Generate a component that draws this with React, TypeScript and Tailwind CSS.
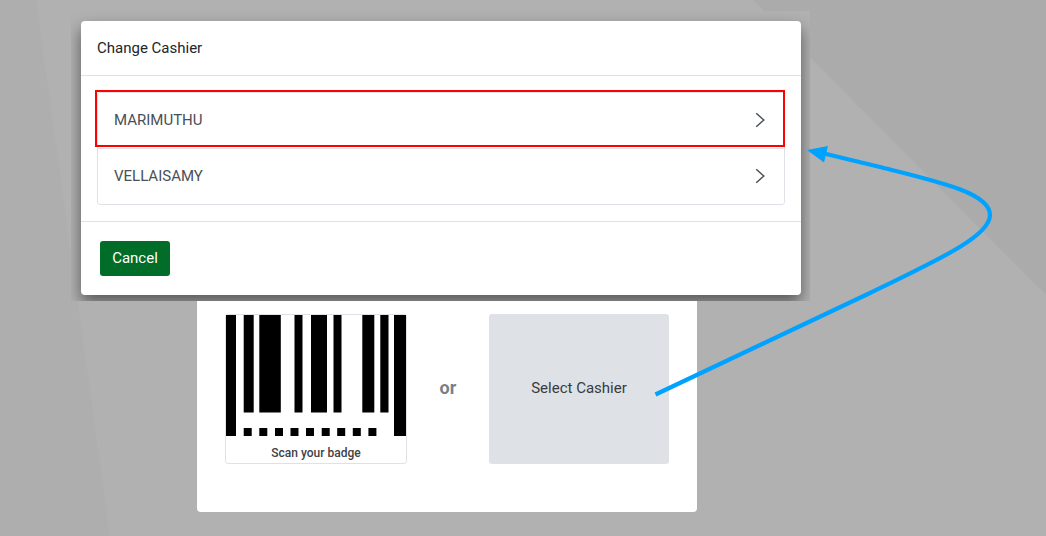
const cashiers = [
  { name: 'MARIMUTHU', highlighted: true },
  { name: 'VELLAISAMY', highlighted: false },
];

const bars = [
  [0, 10, 121],
  [17.7, 10, 97.5],
  [33.3, 21.5, 97.5],
  [68.5, 8, 97.5],
  [85, 16, 97.5],
  [107.5, 8, 97.5],
  [136.3, 12, 97.5],
  [154.3, 8.2, 97.5],
  [168, 12, 121],
];

const dots = [17.7, 33.3, 49, 64.5, 80, 95.7, 111.2, 126.8, 142.4];

function Backdrop() {
  return (
    <svg
      className="absolute inset-0 h-full w-full"
      viewBox="0 0 1046 536"
      preserveAspectRatio="none"
      aria-hidden="true"
    >
      <polygon points="0,0 36,0 110,536 0,536" fill="#aeaeae" />
      <polygon points="753,0 1046,0 1046,295" fill="#ababab" />
    </svg>
  );
}

function Arrow() {
  return (
    <svg
      className="pointer-events-none absolute left-0 top-0 h-[536px] w-[1046px]"
      viewBox="0 0 1046 536"
      aria-hidden="true"
    >
      <path
        d="M655.5 394.5 L870 293 C940 259 990 236 990 215 C990 193 940 182 880 167 L822 153"
        fill="none"
        stroke="#00a2ff"
        strokeWidth="4.2"
      />
      <polygon points="807,150 828,146 824,162.5" fill="#00a2ff" />
    </svg>
  );
}

function Barcode() {
  return (
    <svg className="block h-[121px] w-full" viewBox="0 0 180 121" preserveAspectRatio="none" aria-hidden="true">
      {bars.map(([x, w, h]) => (
        <rect key={x} x={x} y="0" width={w} height={h} />
      ))}
      {dots.map((x) => (
        <rect key={x} x={x} y="113" width="8" height="8" />
      ))}
    </svg>
  );
}

function Chevron() {
  return (
    <svg className="h-4 w-4" viewBox="0 0 16 16" fill="none" stroke="#495057" strokeWidth="1.5" aria-hidden="true">
      <path d="M4.2 0.3 L11.8 7 L4.2 13.7" />
    </svg>
  );
}

function CashierDialog() {
  return (
    <div className="overflow-hidden bg-[#b1b1b1] pb-[6px] pl-[10px] pr-[9px] pt-[10px]">
      <section
        role="dialog"
        aria-labelledby="dialog-title"
        className="rounded bg-white shadow-[0_8px_16px_rgba(0,0,0,0.5)]"
      >
        <header className="border-b border-[#dee2e6] px-4 py-4">
          <h1 id="dialog-title" className="text-[15px] leading-[22px] text-[#212529]">
            Change Cashier
          </h1>
        </header>
        <ul className="m-4 divide-y divide-[#dee2e6] rounded-[3px] border border-[#dee2e6]">
          {cashiers.map(({ name, highlighted }) => (
            <li key={name} className="relative">
              <button
                type="button"
                className="flex h-[55px] w-full items-center justify-between px-4 text-[15px] text-[#495057]"
              >
                {name}
                <Chevron />
              </button>
              {highlighted && (
                <span className="pointer-events-none absolute -left-[3px] -right-px -top-[3px] bottom-px border-2 border-[#ff0000]" />
              )}
            </li>
          ))}
        </ul>
        <footer className="border-t border-[#dee2e6] px-[19px] py-[19px]">
          <button
            type="button"
            className="block h-[35px] w-[70px] rounded-[3px] bg-[#026d28] text-[15px] text-white"
          >
            Cancel
          </button>
        </footer>
      </section>
    </div>
  );
}

function LoginCard() {
  return (
    <section className="ml-[126px] mr-[113px] flex items-center justify-between rounded-b bg-white px-7 pb-12 pt-[13px]">
      <div className="w-[182px] rounded-[3px] border border-[#dee2e6]">
        <Barcode />
        <p className="pb-[2px] pt-[9px] text-center text-xs font-medium leading-4 text-[#3f4247]">Scan your badge</p>
      </div>
      <span className="pb-[2px] text-lg font-bold text-[#76808a]">or</span>
      <button type="button" className="h-[150px] w-[180px] rounded-[3px] bg-[#dee2e6] pb-[2px] text-[15px] text-[#373b3f]">
        Select Cashier
      </button>
    </section>
  );
}

export default function App() {
  return (
    <main className="relative min-h-screen overflow-hidden bg-[#b1b1b1] font-['Roboto',sans-serif]">
      <Backdrop />
      <div className="relative max-w-[810px] pl-[71px] pt-[11px]">
        <CashierDialog />
        <LoginCard />
      </div>
      <Arrow />
    </main>
  );
}
